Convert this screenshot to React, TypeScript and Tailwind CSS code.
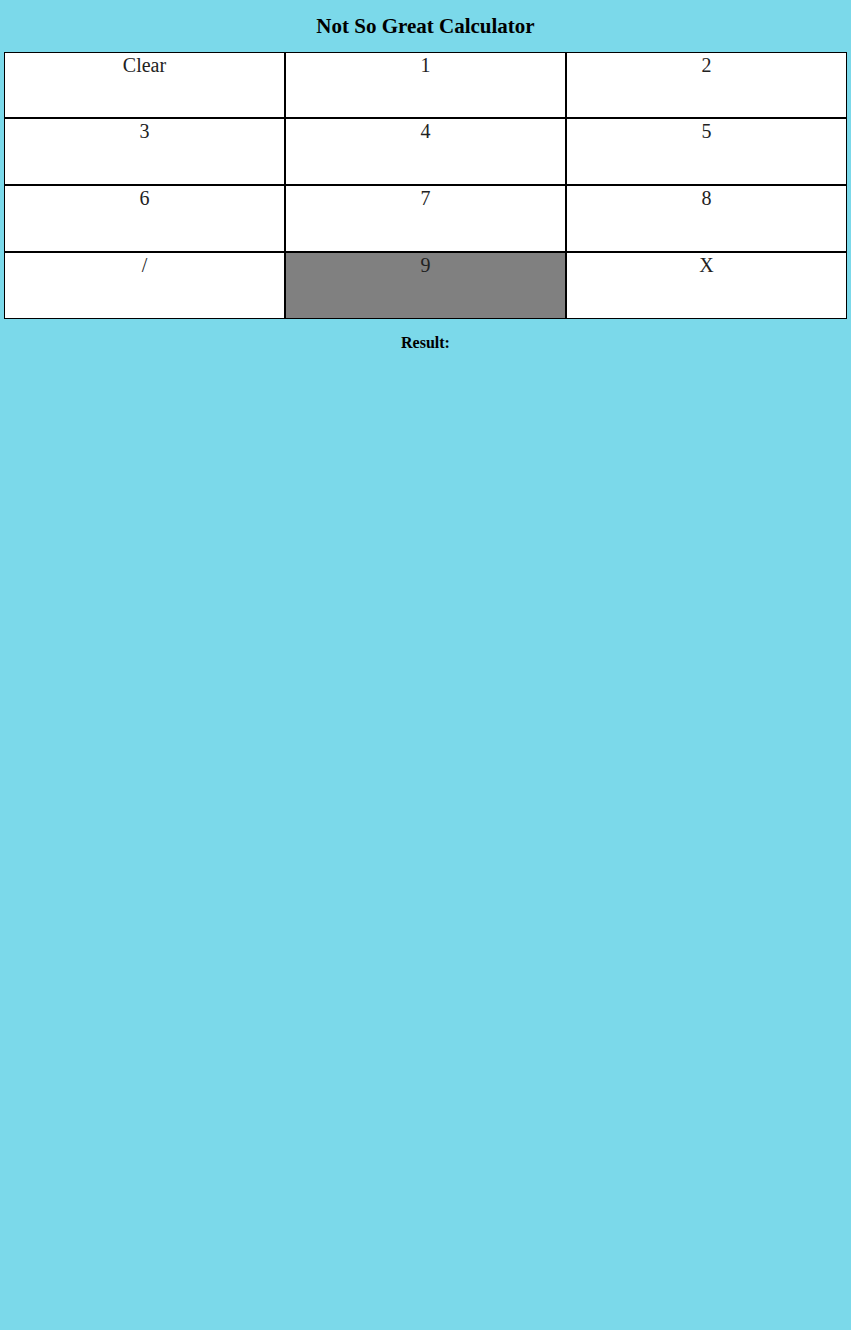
const keys = ["Clear", "1", "2", "3", "4", "5", "6", "7", "8", "/", "9", "X"];

export default function App() {
  return (
    <div
      className="min-h-[1330px] bg-[#7bd9ea] text-black"
      style={{ fontFamily: '"Liberation Serif", "Times New Roman", serif' }}
    >
      <h1 className="pt-[12px] pb-[11px] text-center text-[21px] font-bold leading-[29px]">
        Not So Great Calculator
      </h1>
      <div className="mx-[4px] grid grid-cols-3">
        {keys.map((k, i) => (
          <div
            key={k}
            className={`border border-black text-center text-xl leading-[24px] text-[#222] ${
              i < 3 ? "h-[66px]" : "h-[67px]"
            } ${k === "9" ? "bg-[#808080]" : "bg-white"}`}
          >
            {k}
          </div>
        ))}
      </div>
      <p className="pt-[12px] text-center text-base font-bold">Result:</p>
    </div>
  );
}
